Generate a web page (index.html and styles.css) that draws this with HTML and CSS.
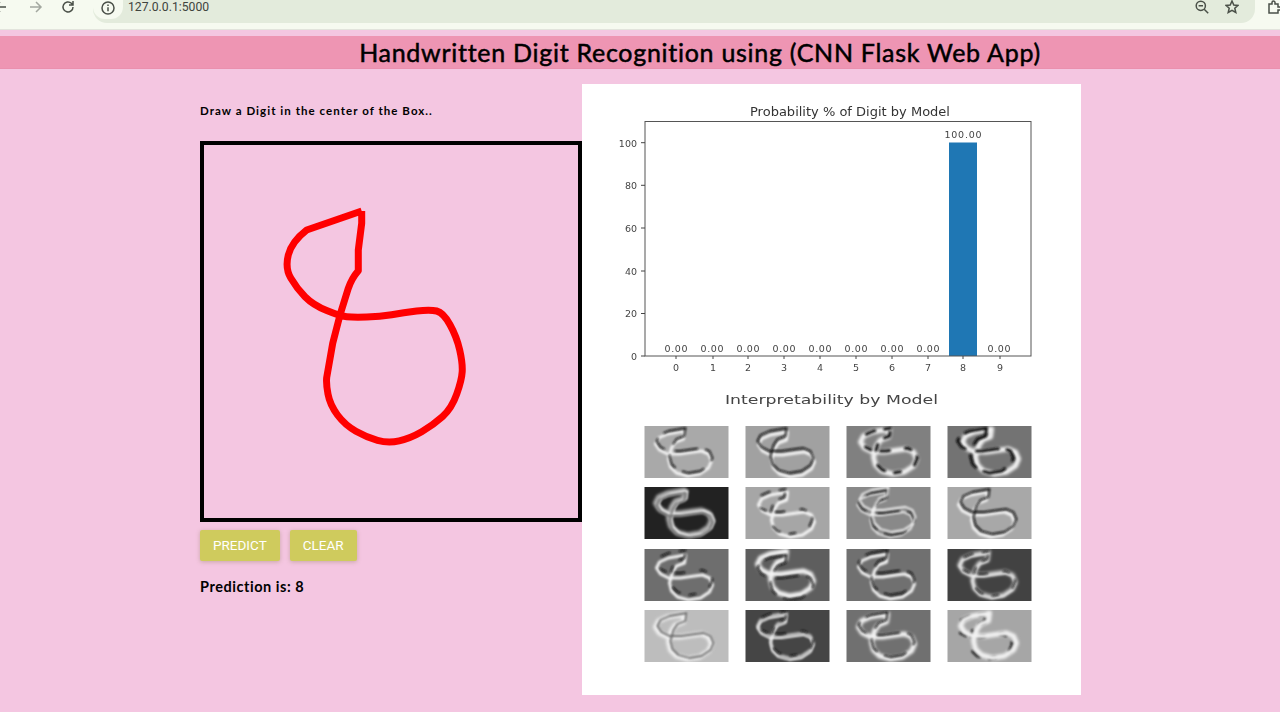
FILE: index.html
```html
<!DOCTYPE html>
<html lang="en">
<head>
  <meta charset="UTF-8">
  <title>Handwritten Digit Recognition</title>
  <link rel="stylesheet" href="styles.css">
</head>
<body>
  <!-- browser chrome -->
  <div class="toolbar">
    <svg class="tool-icon back" viewBox="0 0 14 14"><path d="M13 7H2M7 2L2 7l5 5"/></svg>
    <svg class="tool-icon forward" viewBox="0 0 14 14"><path d="M1 7h11M7 2l5 5-5 5"/></svg>
    <svg class="tool-icon reload" viewBox="0 0 14 14"><path d="M12 7a5 5 0 1 1-1.6-3.7L12 5M12 1v4H8"/></svg>
    <div class="omnibox">
      <span class="site-info">
        <svg class="tool-icon" viewBox="0 0 14 14"><circle cx="7" cy="7" r="6"/><path d="M7 6.2v4M7 3.6v1.3"/></svg>
      </span>
      <span class="url">127.0.0.1:5000</span>
      <svg class="tool-icon zoom-out" viewBox="0 0 14 14"><circle cx="5.8" cy="5.8" r="4.6"/><path d="M3.6 5.8h4.4M9.2 9.2l4 4"/></svg>
      <svg class="tool-icon star" viewBox="0 0 14 14"><path d="M7 1l1.8 4 4.2.4-3.2 2.8 1 4.3L7 10.300l-3.800 2.200 1-4.300L1 5.400 5.200 5z"/></svg>
    </div>
    <svg class="tool-icon puzzle" viewBox="0 0 14 14"><path d="M1 4h3V2.500a1.500 1.500 0 0 1 3 0V4h3v3h1.500a1.500 1.500 0 0 1 0 3H10v3H1z"/></svg>
  </div>

  <h1 class="page-title">Handwritten Digit Recognition using (CNN Flask Web App)</h1>

  <div class="content">
    <div class="left-col">
      <p class="hint">Draw a Digit in the center of the Box..</p>
      <div class="canvas-box">
        <svg class="drawing" viewBox="0 0 374 373">
          <path d="M157.700 66L102.700 85Q87.700 96.700 84.300 110T86.900 133.300Q92.700 143.300 101 151.700T122.700 165.500Q136 171 142.700 171.700T162.700 172Q176 171.700 187.700 169.700T212.700 166Q226 164.300 232.700 166T246 179.700Q252.700 191.700 255.700 205T258.200 226.700Q257.700 235 252.700 249.200T238.500 271.700Q229.300 280 217.700 286.700T195.200 295.800Q184.300 298.300 173.500 295.300T151.900 286.200Q141 280 133.500 270T124 249.200Q122 238.300 122.700 232.500L128.700 198.300 136 170 144.300 143.300Q147.700 133.300 154.300 125.700L154.300 105 157.700 78.300V66"/>
        </svg>
      </div>
      <div class="buttons">
        <button class="btn">Predict</button>
        <button class="btn">Clear</button>
      </div>
      <p class="result">Prediction is: 8</p>
    </div>

    <div class="plot-panel">
      <svg class="chart" viewBox="0 0 499 335">
        <text class="chart-title" x="268" y="31.500" text-anchor="middle" textLength="200" lengthAdjust="spacingAndGlyphs">Probability % of Digit by Model</text>
        <rect class="bar" x="367" y="58.500" width="28" height="213.500"/>
        <rect class="axes" x="63" y="37.500" width="386" height="234.500"/>
        <path class="ticks" d="M59 58.700h4M59 101.300h4M59 144h4M59 187h4M59 229.500h4M59 272h4M94 272v3M131 272v3M166 272v3M202 272v3M238 272v3M274 272v3M310 272v3M346 272v3M381 272v3M418 272v3"/>
        <g class="tick-labels" text-anchor="end">
          <text x="55" y="62.500">100</text>
          <text x="55" y="105">80</text>
          <text x="55" y="148">60</text>
          <text x="55" y="191">40</text>
          <text x="55" y="233">20</text>
          <text x="55" y="275.500">0</text>
        </g>
        <g class="tick-labels" text-anchor="middle">
          <text x="94" y="286.500">0</text>
          <text x="131" y="286.500">1</text>
          <text x="166" y="286.500">2</text>
          <text x="202" y="286.500">3</text>
          <text x="238" y="286.500">4</text>
          <text x="274" y="286.500">5</text>
          <text x="310" y="286.500">6</text>
          <text x="346" y="286.500">7</text>
          <text x="381" y="286.500">8</text>
          <text x="418" y="286.500">9</text>
        </g>
        <g class="tick-labels" text-anchor="middle">
          <text x="94" y="268" textLength="23">0.00</text>
          <text x="130" y="268" textLength="23">0.00</text>
          <text x="166" y="268" textLength="23">0.00</text>
          <text x="202" y="268" textLength="23">0.00</text>
          <text x="238" y="268" textLength="23">0.00</text>
          <text x="274" y="268" textLength="23">0.00</text>
          <text x="310" y="268" textLength="23">0.00</text>
          <text x="346" y="268" textLength="23">0.00</text>
          <text x="381" y="53.500" textLength="37">100.00</text>
          <text x="417" y="268" textLength="23">0.00</text>
        </g>
        <text class="section-title" x="249.500" y="320" text-anchor="middle" textLength="213" lengthAdjust="spacingAndGlyphs">Interpretability by Model</text>
      </svg>

      <!-- shared digit stroke + blur for the feature maps -->
      <svg class="defs-only">
        <defs>
          <path id="d8" d="M41 3L24 6 15 10 12 16 16 22 24 26 36 26 50 24 58 23 65 26 68 33 65 40 56 46 44 48 33 45 27 39 25 31 28 20 32 14 40 11 41 3"/>
          <filter id="soft" x="-20%" y="-20%" width="140%" height="140%"><feGaussianBlur stdDeviation="0.900"/></filter>
          <filter id="softer" x="-20%" y="-20%" width="140%" height="140%"><feGaussianBlur stdDeviation="1.800"/></filter>
        </defs>
      </svg>

      <div class="maps">
        <svg class="map" viewBox="0 0 84 52"><rect width="84" height="52" fill="#a9a9a9"/><use href="#d8" class="glow" x="-1" y="2"/><use href="#d8" class="line dark patchy" y="-1"/></svg>
        <svg class="map" viewBox="0 0 84 52"><rect width="84" height="52" fill="#a1a1a1"/><use href="#d8" class="glow" x="1" y="3"/><use href="#d8" class="line dark" y="-1"/></svg>
        <svg class="map" viewBox="0 0 84 52"><rect width="84" height="52" fill="#808080"/><use href="#d8" class="glow wide" x="2"/><use href="#d8" class="line dark thick blotchy" x="3" y="-1"/></svg>
        <svg class="map" viewBox="0 0 84 52"><rect width="84" height="52" fill="#737373"/><use href="#d8" class="glow wide" x="3"/><use href="#d8" class="line dark thick patchy" x="-2" y="-1"/></svg>

        <svg class="map" viewBox="0 0 84 52"><rect width="84" height="52" fill="#222"/><use href="#d8" class="glow wide mid" x="-1"/><use href="#d8" class="line white" x="2" y="1"/><use href="#d8" class="line grey" y="3"/></svg>
        <svg class="map" viewBox="0 0 84 52"><rect width="84" height="52" fill="#a6a6a6"/><use href="#d8" class="line white thick" x="1" y="2"/><use href="#d8" class="line dark blotchy" x="-1" y="-1"/></svg>
        <svg class="map" viewBox="0 0 84 52"><rect width="84" height="52" fill="#898989"/><use href="#d8" class="line white" x="-1" y="2"/><use href="#d8" class="line dark patchy"/><use href="#d8" class="line white" x="1" y="-3"/></svg>
        <svg class="map" viewBox="0 0 84 52"><rect width="84" height="52" fill="#a8a8a8"/><use href="#d8" class="glow" x="-1" y="2"/><use href="#d8" class="line dark" x="1" y="-1"/></svg>

        <svg class="map" viewBox="0 0 84 52"><rect width="84" height="52" fill="#6e6e6e"/><use href="#d8" class="glow" y="3"/><use href="#d8" class="line dark blotchy" y="-2"/></svg>
        <svg class="map" viewBox="0 0 84 52"><rect width="84" height="52" fill="#5e5e5e"/><use href="#d8" class="glow wide" y="-1"/><use href="#d8" class="line dark patchy" y="3"/></svg>
        <svg class="map" viewBox="0 0 84 52"><rect width="84" height="52" fill="#707070"/><use href="#d8" class="glow" y="2"/><use href="#d8" class="line dark patchy" y="-2"/></svg>
        <svg class="map" viewBox="0 0 84 52"><rect width="84" height="52" fill="#424242"/><use href="#d8" class="glow wide mid"/><use href="#d8" class="line white" y="1"/><use href="#d8" class="line dark blotchy" y="-1"/></svg>

        <svg class="map" viewBox="0 0 84 52"><rect width="84" height="52" fill="#bdbdbd"/><use href="#d8" class="glow wide" x="-1" y="1"/><use href="#d8" class="line grey-dark" x="1"/></svg>
        <svg class="map" viewBox="0 0 84 52"><rect width="84" height="52" fill="#454545"/><use href="#d8" class="glow mid"/><use href="#d8" class="line white" y="2"/><use href="#d8" class="line dark blotchy" y="-2"/></svg>
        <svg class="map" viewBox="0 0 84 52"><rect width="84" height="52" fill="#707070"/><use href="#d8" class="glow wide" y="1"/><use href="#d8" class="line dark patchy" y="-1"/></svg>
        <svg class="map" viewBox="0 0 84 52"><rect width="84" height="52" fill="#a6a6a6"/><use href="#d8" class="line dark thick blotchy" x="-3" y="1"/><use href="#d8" class="glow wide" x="1"/></svg>
      </div>
    </div>
  </div>
</body>
</html>
```

FILE: styles.css
```css
* {
  box-sizing: border-box;
}
html, body {
  height: 100%;
}
body {
  margin: 0;
  background: #f4c6e1;
  overflow: hidden;
  font-family: "Comic Sans MS", Lato, sans-serif;
  color: #000;
}

/* browser chrome */
.toolbar {
  display: flex;
  align-items: flex-start;
  height: 30px;
  background: #f6faf0;
  border-bottom: 1px solid #e2e4dc;
  overflow: hidden;
}
.tool-icon {
  width: 14px;
  height: 14px;
  flex: none;
  fill: none;
  stroke: #4a5048;
  stroke-width: 1.500;
}
.back {
  margin-left: -7px;
}
.forward {
  margin-left: 22px;
  stroke: #a3a8a0;
}
.reload {
  margin-left: 18px;
}
.omnibox {
  display: flex;
  align-items: flex-start;
  flex: none;
  width: 1162px;
  height: 23px;
  margin-left: 18px;
  background: #e3ebdc;
  border-radius: 0 0 14px 14px;
}
.site-info {
  display: flex;
  align-items: center;
  justify-content: center;
  width: 30px;
  height: 23px;
  margin-top: -4px;
  background: #f6faf0;
  border-radius: 0 0 12px 12px;
}
.url {
  margin-left: 5px;
  font-family: Roboto, sans-serif;
  font-size: 12.200px;
  line-height: 15px;
  color: #40443e;
}
.zoom-out {
  margin-left: auto;
}
.star {
  margin: 0 16px;
}
.puzzle {
  margin-left: 13px;
}

.page-title {
  height: 33px;
  margin: 6px 0 0;
  padding-left: 120px;
  background: #ee95b3;
  border-bottom: 1px solid #ea90ae;
  font-size: 25px;
  font-weight: 400;
  line-height: 33px;
  letter-spacing: 0.72px;
  text-align: center;
  -webkit-text-stroke: 0.5px #000;
}

.content {
  display: flex;
  align-items: flex-start;
  padding: 15px 0 0 200px;
}

/* left column */
.left-col {
  width: 382px;
}
.hint {
  margin: 19px 0 23px;
  font-size: 11.500px;
  font-weight: bold;
  line-height: 15px;
  letter-spacing: 1.050px;
}
.canvas-box {
  width: 382px;
  height: 381px;
  border: 4px solid #000;
}
.drawing {
  display: block;
  width: 374px;
  height: 373px;
}
.drawing path {
  fill: none;
  stroke: #f00;
  stroke-width: 7;
  stroke-linejoin: round;
}
.buttons {
  display: flex;
  gap: 10px;
  margin-top: 8px;
}
.btn {
  height: 31px;
  padding: 0 13px 2px;
  border: 0;
  border-radius: 2px;
  background: #cfcb5d;
  box-shadow: 0 1px 4px rgba(120, 110, 60, 0.35);
  color: #fff;
  font-family: Roboto, sans-serif;
  font-size: 13.500px;
  text-transform: uppercase;
}
.result {
  margin: 17px 0 0;
  font-size: 14.500px;
  font-weight: bold;
  line-height: 18px;
  letter-spacing: 0.55px;
}

/* matplotlib output on the right */
.plot-panel {
  width: 499px;
  height: 611px;
  background: #fff;
}
.chart {
  display: block;
  width: 499px;
  height: 335px;
  margin-bottom: 7px;
  font-family: "DejaVu Sans", sans-serif;
  filter: blur(0.3px);
}
.chart-title {
  font-size: 11.500px;
  fill: #333;
}
.section-title {
  font-size: 13px;
  fill: #444;
}
.bar {
  fill: #1f77b4;
}
.axes {
  fill: none;
  stroke: #555;
  stroke-width: 1;
}
.ticks {
  fill: none;
  stroke: #444;
  stroke-width: 1;
}
.tick-labels {
  font-size: 9.500px;
  fill: #444;
}
.defs-only {
  display: block;
  width: 0;
  height: 0;
}
.maps {
  display: grid;
  grid-template-columns: repeat(4, 85px);
  grid-auto-rows: 52px;
  column-gap: 16px;
  row-gap: 9.300px;
  padding-left: 62px;
}
.map {
  display: block;
  width: 85px;
  height: 52px;
  filter: blur(0.4px);
}
.map use {
  fill: none;
  stroke-linejoin: round;
  stroke-linecap: round;
}
.glow {
  stroke: #f2f2f2;
  stroke-width: 3;
  filter: url(#soft);
}
.glow.wide {
  stroke-width: 5;
  filter: url(#softer);
}
.glow.mid {
  stroke: #b0b0b0;
}
.line {
  stroke-width: 1.800;
  filter: url(#soft);
}
.line.thick {
  stroke-width: 3;
}
.patchy {
  stroke-dasharray: 22 9 14 12;
}
.blotchy {
  stroke-dasharray: 6 10 9 16;
}
.dark {
  stroke: #111;
}
.white {
  stroke: #f4f4f4;
}
.grey {
  stroke: #777;
}
.grey-dark {
  stroke: #666;
}
```
